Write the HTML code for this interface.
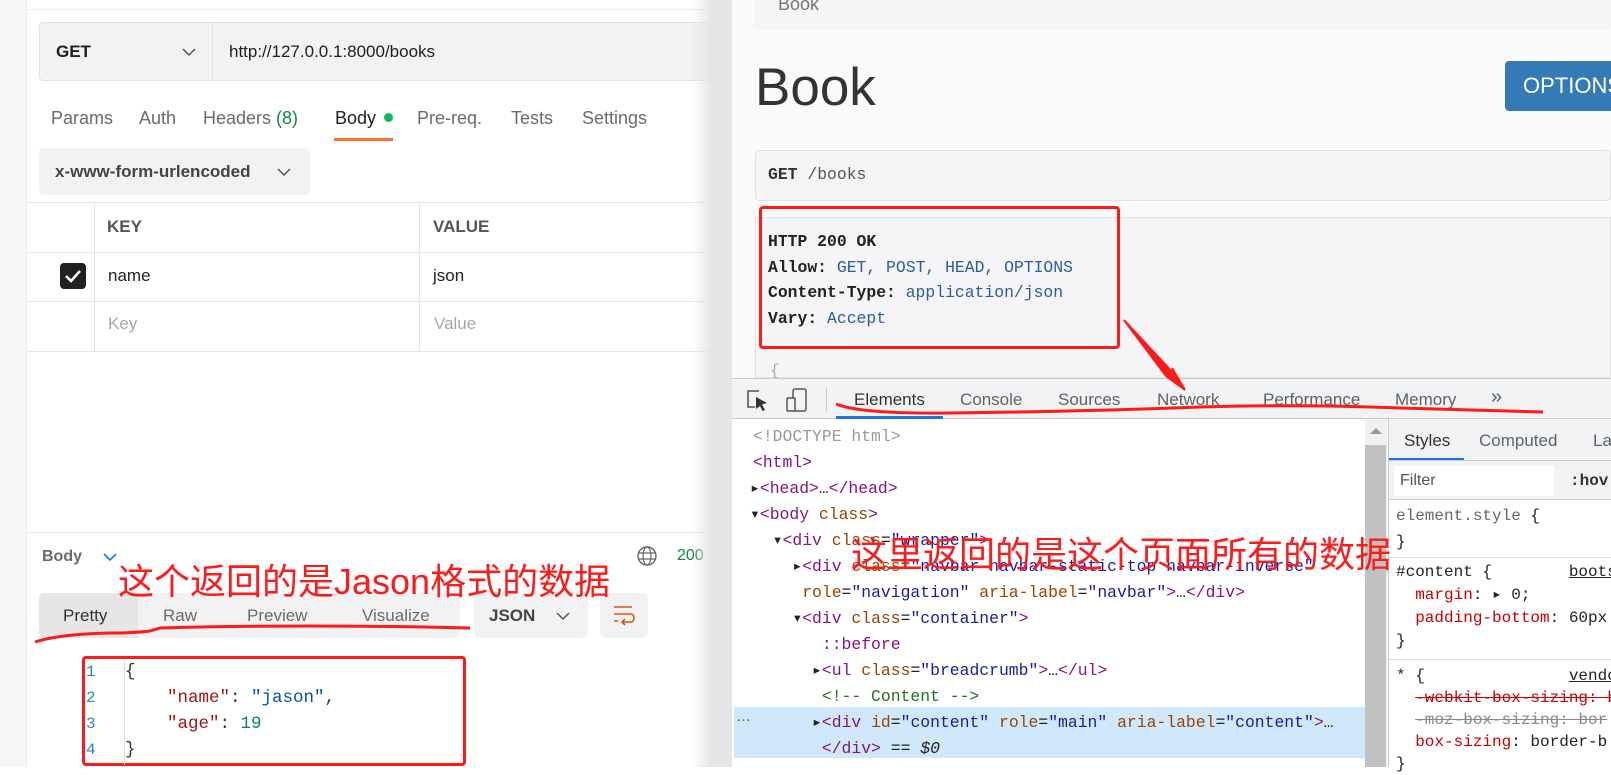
<!DOCTYPE html>
<html><head><meta charset="utf-8"><style>
*{margin:0;padding:0;box-sizing:border-box}
body{width:1611px;height:767px;overflow:hidden;position:relative;background:#fff;font-family:"Liberation Sans","Noto Sans CJK SC",sans-serif}
.a{position:absolute;white-space:nowrap}
.m{font-family:"Liberation Mono","DejaVu Sans Mono",monospace}
.red{border:3px solid #ff1a1a;border-radius:4px}
.t{color:#881280}.at{color:#994500}.v{color:#1a1aa6}
.tab{font-size:18px;color:#6b6b6b;top:107px;line-height:22px}
.dt{font-size:17px;color:#5f6368;top:390px;line-height:20px}
</style></head><body>
<!-- left panel -->
<div class="a" style="left:0;top:0;width:27px;height:767px;background:#f7f7f7;border-right:1px solid #e8e8e8"></div>
<div class="a" style="left:27px;top:9px;width:685px;height:1px;background:#ebebeb"></div>
<div class="a" style="left:39px;top:22px;width:673px;height:59px;background:#f2f2f2;border:1px solid #e2e2e2;border-radius:4px"></div>
<div class="a" style="left:212px;top:22px;width:1px;height:59px;background:#e0e0e0"></div>
<div class="a" style="left:56px;top:42px;font-size:17px;font-weight:bold;color:#212121;line-height:20px">GET</div>
<svg class="a" style="left:182px;top:47px" width="14" height="10"><path d="M1 2 L7 8 L13 2" stroke="#555" stroke-width="1.5" fill="none"/></svg>
<div class="a" style="left:229px;top:42px;font-size:17px;color:#212121;line-height:20px">http://127.0.0.1:8000/books</div>
<div class="a tab" style="left:51px">Params</div>
<div class="a tab" style="left:139px">Auth</div>
<div class="a tab" style="left:203px">Headers <span style="color:#0a8a3e">(8)</span></div>
<div class="a tab" style="left:335px;color:#212121">Body</div>
<div class="a" style="left:384px;top:113px;width:9px;height:9px;border-radius:50%;background:#0cbb52"></div>
<div class="a" style="left:334px;top:138px;width:59px;height:3px;background:#ff6c37"></div>
<div class="a tab" style="left:417px">Pre-req.</div>
<div class="a tab" style="left:511px">Tests</div>
<div class="a tab" style="left:582px">Settings</div>
<div class="a" style="left:39px;top:148px;width:271px;height:47px;background:#f2f2f2;border-radius:5px"></div>
<div class="a" style="left:55px;top:162px;font-size:17px;font-weight:bold;color:#444;line-height:20px">x-www-form-urlencoded</div>
<svg class="a" style="left:277px;top:167px" width="14" height="10"><path d="M1 2 L7 8 L13 2" stroke="#555" stroke-width="1.5" fill="none"/></svg>
<div class="a" style="left:27px;top:202px;width:685px;height:1px;background:#e6e6e6"></div>
<div class="a" style="left:27px;top:252px;width:685px;height:1px;background:#e6e6e6"></div>
<div class="a" style="left:27px;top:301px;width:685px;height:1px;background:#e6e6e6"></div>
<div class="a" style="left:27px;top:351px;width:685px;height:1px;background:#e6e6e6"></div>
<div class="a" style="left:94px;top:202px;width:1px;height:149px;background:#e6e6e6"></div>
<div class="a" style="left:419px;top:202px;width:1px;height:149px;background:#e6e6e6"></div>
<div class="a" style="left:107px;top:217px;font-size:17px;font-weight:bold;color:#555;line-height:20px">KEY</div>
<div class="a" style="left:433px;top:217px;font-size:17px;font-weight:bold;color:#555;line-height:20px">VALUE</div>
<div class="a" style="left:60px;top:263px;width:26px;height:26px;background:#212121;border-radius:4px"></div>
<svg class="a" style="left:60px;top:263px" width="26" height="26"><path d="M6 13 L11 18 L20 8" stroke="#fff" stroke-width="2.6" fill="none"/></svg>
<div class="a" style="left:108px;top:266px;font-size:17px;color:#212121;line-height:20px">name</div>
<div class="a" style="left:433px;top:266px;font-size:17px;color:#212121;line-height:20px">json</div>
<div class="a" style="left:108px;top:314px;font-size:17px;color:#a6a6a6;line-height:20px">Key</div>
<div class="a" style="left:434px;top:314px;font-size:17px;color:#a6a6a6;line-height:20px">Value</div>
<div class="a" style="left:27px;top:532px;width:685px;height:1px;background:#e6e6e6"></div>
<div class="a" style="left:42px;top:547px;font-size:16px;font-weight:bold;color:#6b6b6b;line-height:20px">Body</div>
<svg class="a" style="left:103px;top:553px" width="14" height="9"><path d="M1 1 L7 7 L13 1" stroke="#1a73e8" stroke-width="1.6" fill="none"/></svg>
<svg class="a" style="left:636px;top:545px" width="22" height="22"><circle cx="11" cy="11" r="9" stroke="#666" stroke-width="1.4" fill="none"/><ellipse cx="11" cy="11" rx="4" ry="9" stroke="#666" stroke-width="1.2" fill="none"/><path d="M2 8 H20 M2 14 H20" stroke="#666" stroke-width="1.2"/></svg>
<div class="a" style="left:677px;top:546px;font-size:16px;color:#0a8a3e;line-height:20px">200</div>
<div class="a" style="left:39px;top:593px;width:421px;height:45px;background:#f2f2f2;border-radius:5px"></div>
<div class="a" style="left:39px;top:593px;width:99px;height:45px;background:#e6e6e6;border-radius:5px 0 0 5px"></div>
<div class="a" style="left:63px;top:606px;font-size:17px;color:#333;line-height:20px">Pretty</div>
<div class="a" style="left:163px;top:606px;font-size:17px;color:#6b6b6b;line-height:20px">Raw</div>
<div class="a" style="left:247px;top:606px;font-size:17px;color:#6b6b6b;line-height:20px">Preview</div>
<div class="a" style="left:362px;top:606px;font-size:17px;color:#6b6b6b;line-height:20px">Visualize</div>
<div class="a" style="left:474px;top:593px;width:114px;height:45px;background:#f2f2f2;border-radius:5px"></div>
<div class="a" style="left:489px;top:606px;font-size:17px;font-weight:bold;color:#444;line-height:20px">JSON</div>
<svg class="a" style="left:556px;top:611px" width="14" height="10"><path d="M1 2 L7 8 L13 2" stroke="#555" stroke-width="1.5" fill="none"/></svg>
<div class="a" style="left:600px;top:593px;width:48px;height:45px;background:#f2f2f2;border-radius:5px"></div>
<svg class="a" style="left:612px;top:604px" width="24" height="22"><path d="M2 3 H20 M2 10 H18 Q22 10 22 14 Q22 18 18 18 H10 M13 15 L10 18 L13 21 M2 17 H6" stroke="#e0531a" stroke-width="1.6" fill="none"/></svg>
<div class="a" style="left:118px;top:562px;font-size:36px;line-height:40px;color:#ff1a1a">这个返回的是Jason格式的数据</div>
<div class="a red" style="left:82px;top:656px;width:384px;height:110px"></div>
<div class="a m" style="left:86px;top:659px;font-size:16px;line-height:26px;color:#2a8ab5;white-space:pre">1
2
3
4</div>
<div class="a" style="left:124px;top:660px;width:1px;height:105px;background:#ddd"></div>
<div class="a m" style="left:125px;top:659px;font-size:17.5px;line-height:26px;color:#333;white-space:pre">{
    <span style="color:#a31515">"name"</span>: <span style="color:#0451a5">"jason"</span>,
    <span style="color:#a31515">"age"</span>: <span style="color:#098658">19</span>
}</div>
<div class="a" style="left:692px;top:0;width:20px;height:767px;background:linear-gradient(to right,rgba(255,255,255,0),#e4e4e4)"></div>

<!-- right browser -->
<div class="a" style="left:712px;top:0;width:899px;height:378px;background:#fafafa"></div>
<div class="a" style="left:712px;top:0;width:20px;height:767px;background:#e6e6e6"></div>
<div class="a" style="left:755px;top:0;width:856px;height:30px;background:#f5f5f5;border-radius:0 0 4px 4px"></div>
<div class="a" style="left:778px;top:-6px;font-size:18px;color:#777;line-height:20px">Book</div>
<div class="a" style="left:755px;top:58px;font-size:53px;color:#333;line-height:60px">Book</div>
<div class="a" style="left:1505px;top:61px;width:106px;height:50px;background:#337ab7;border-radius:4px 0 0 4px"></div>
<div class="a" style="left:1523px;top:73px;font-size:22px;color:#fff;line-height:26px">OPTIONS</div>
<div class="a" style="left:755px;top:150px;width:856px;height:51px;background:#f5f5f5;border:1px solid #e3e3e3;border-radius:4px"></div>
<div class="a m" style="left:768px;top:165px;font-size:16.4px;color:#333;line-height:20px"><b>GET</b> <span style="color:#555">/books</span></div>
<div class="a" style="left:755px;top:217px;width:856px;height:161px;background:#f5f5f7;border:1px solid #e3e3e3"></div>
<div class="a m" style="left:768px;top:229px;font-size:16.4px;line-height:25.7px;color:#222;white-space:pre"><b>HTTP 200 OK</b>
<b>Allow:</b> <span style="color:#2a5d9f">GET, POST, HEAD, OPTIONS</span>
<b>Content-Type:</b> <span style="color:#2a5d9f">application/json</span>
<b>Vary:</b> <span style="color:#2a5d9f">Accept</span></div>
<div class="a red" style="left:759px;top:206px;width:361px;height:143px"></div>
<div class="a m" style="left:770px;top:362px;font-size:16px;color:#aaa">{</div>

<!-- devtools -->
<div class="a" style="left:732px;top:378px;width:879px;height:41px;background:#f1f3f4;border-top:1px solid #ccc;border-bottom:1px solid #ccc"></div>
<svg class="a" style="left:745px;top:388px" width="70" height="26"><path d="M14 3 H3 V19 H10" stroke="#555" stroke-width="1.6" fill="none"/><path d="M11 9 L22 15 L17 16.5 L20 22 L17.5 23 L15 18 L11 21 Z" fill="#333"/><rect x="48" y="1" width="13" height="22" rx="2" fill="none" stroke="#555" stroke-width="1.5"/><rect x="42" y="10" width="8" height="13" rx="1" fill="#f1f3f4" stroke="#555" stroke-width="1.5"/></svg>
<div class="a" style="left:826px;top:387px;width:1px;height:24px;background:#ccc"></div>
<div class="a dt" style="left:854px;color:#333">Elements</div>
<div class="a" style="left:836px;top:416px;width:107px;height:3px;background:#1a73e8"></div>
<div class="a dt" style="left:960px">Console</div>
<div class="a dt" style="left:1058px">Sources</div>
<div class="a dt" style="left:1157px">Network</div>
<div class="a dt" style="left:1263px">Performance</div>
<div class="a dt" style="left:1395px">Memory</div>
<div class="a dt" style="left:1491px;font-size:20px;top:387px">»</div>
<div class="a" style="left:1365px;top:419px;width:22px;height:348px;background:#f1f1f1"></div>
<svg class="a" style="left:1369px;top:427px" width="14" height="8"><path d="M7 1 L13 7 H1 Z" fill="#999"/></svg>
<div class="a" style="left:1365px;top:445px;width:21px;height:322px;background:#c1c1c1"></div>
<div class="a" style="left:1388px;top:419px;width:1px;height:348px;background:#ccc"></div>
<div class="a" style="left:734px;top:707px;width:631px;height:51px;background:#cfe8fc"></div>
<div class="a m" style="left:753px;top:424px;font-size:16.4px;line-height:26px;white-space:pre;color:#222"><span style="color:#999">&lt;!DOCTYPE html&gt;</span>
<span class="t">&lt;html&gt;</span>
<span style="margin-left:-3px">▸</span><span class="t">&lt;head&gt;</span>…<span class="t">&lt;/head&gt;</span>
<span style="margin-left:-3px">▾</span><span class="t">&lt;body </span><span class="at">class</span><span class="t">&gt;</span>
  ▾<span class="t">&lt;div </span><span class="at">class</span>=<span class="v">"wrapper"</span><span class="t">&gt;</span>
    ▸<span class="t">&lt;div </span><span class="at">class</span>=<span class="v">"navbar navbar-static-top navbar-inverse"</span>
     <span class="at">role</span>=<span class="v">"navigation"</span> <span class="at">aria-label</span>=<span class="v">"navbar"</span><span class="t">&gt;</span>…<span class="t">&lt;/div&gt;</span>
    ▾<span class="t">&lt;div </span><span class="at">class</span>=<span class="v">"container"</span><span class="t">&gt;</span>
       <span class="t">::before</span>
      ▸<span class="t">&lt;ul </span><span class="at">class</span>=<span class="v">"breadcrumb"</span><span class="t">&gt;</span>…<span class="t">&lt;/ul&gt;</span>
       <span style="color:#236e25">&lt;!-- Content --&gt;</span>
      ▸<span class="t">&lt;div </span><span class="at">id</span>=<span class="v">"content"</span> <span class="at">role</span>=<span class="v">"main"</span> <span class="at">aria-label</span>=<span class="v">"content"</span><span class="t">&gt;</span>…
       <span class="t">&lt;/div&gt;</span> == <i>$0</i></div>
<div class="a" style="left:736px;top:708px;font-size:15px;color:#555">…</div>
<div class="a" style="left:851px;top:535px;font-size:36px;line-height:40px;color:#ff1a1a">这里返回的是这个页面所有的数据</div>
<div class="a" style="left:1389px;top:419px;width:222px;height:41px;background:#f1f3f4"></div>
<div class="a dt" style="left:1404px;top:431px;color:#333">Styles</div>
<div class="a dt" style="left:1479px;top:431px">Computed</div>
<div class="a dt" style="left:1593px;top:431px">La</div>
<div class="a" style="left:1389px;top:458px;width:75px;height:3px;background:#1a73e8"></div>
<div class="a" style="left:1389px;top:460px;width:222px;height:40px;background:#f1f3f4;border-top:1px solid #ccc;border-bottom:1px solid #ccc"></div>
<div class="a" style="left:1394px;top:466px;width:160px;height:30px;background:#fff"></div>
<div class="a" style="left:1400px;top:471px;font-size:16px;color:#555;line-height:20px">Filter</div>
<div class="a m" style="left:1570px;top:471px;font-size:16px;font-weight:bold;color:#333;line-height:20px">:hov</div>
<div class="a m" style="left:1396px;top:503px;font-size:16px;line-height:26px;white-space:pre;color:#222"><span style="color:#666">element.style</span> {
}</div>
<div class="a" style="left:1389px;top:557px;width:222px;height:1px;background:#ddd"></div>
<div class="a m" style="left:1396px;top:561px;font-size:16px;line-height:23px;white-space:pre;color:#222">#content {        <u>boots</u>
  <span style="color:#c80000">margin</span>: ▸ 0;
  <span style="color:#c80000">padding-bottom</span>: 60px
}</div>
<div class="a" style="left:1389px;top:659px;width:222px;height:1px;background:#ddd"></div>
<div class="a m" style="left:1396px;top:665px;font-size:16px;line-height:22px;white-space:pre;color:#222">* {               <u>vendo</u>
  <s style="color:#c80000">-webkit-box-sizing: b</s>
  <s style="color:#888">-moz-box-sizing: bor</s>
  <span style="color:#c80000">box-sizing</span>: border-b
}</div>
<svg class="a" style="left:0;top:0" width="1611" height="767">
<path d="M35 642 Q60 634 110 633 Q135 633 150 631 L160 628 Q300 624 470 628" stroke="#ff1a1a" stroke-width="3" fill="none"/>
<path d="M836 404 Q860 414 950 413 Q1100 411 1200 407 Q1300 404 1400 408 Q1480 410 1543 412" stroke="#ff1a1a" stroke-width="3" fill="none"/>
<path d="M1124 320 L1176 376 L1172 368 L1185 390 L1166 376 Z" fill="#ff1a1a" stroke="#ff1a1a" stroke-width="2"/>
</svg>
</body></html>
